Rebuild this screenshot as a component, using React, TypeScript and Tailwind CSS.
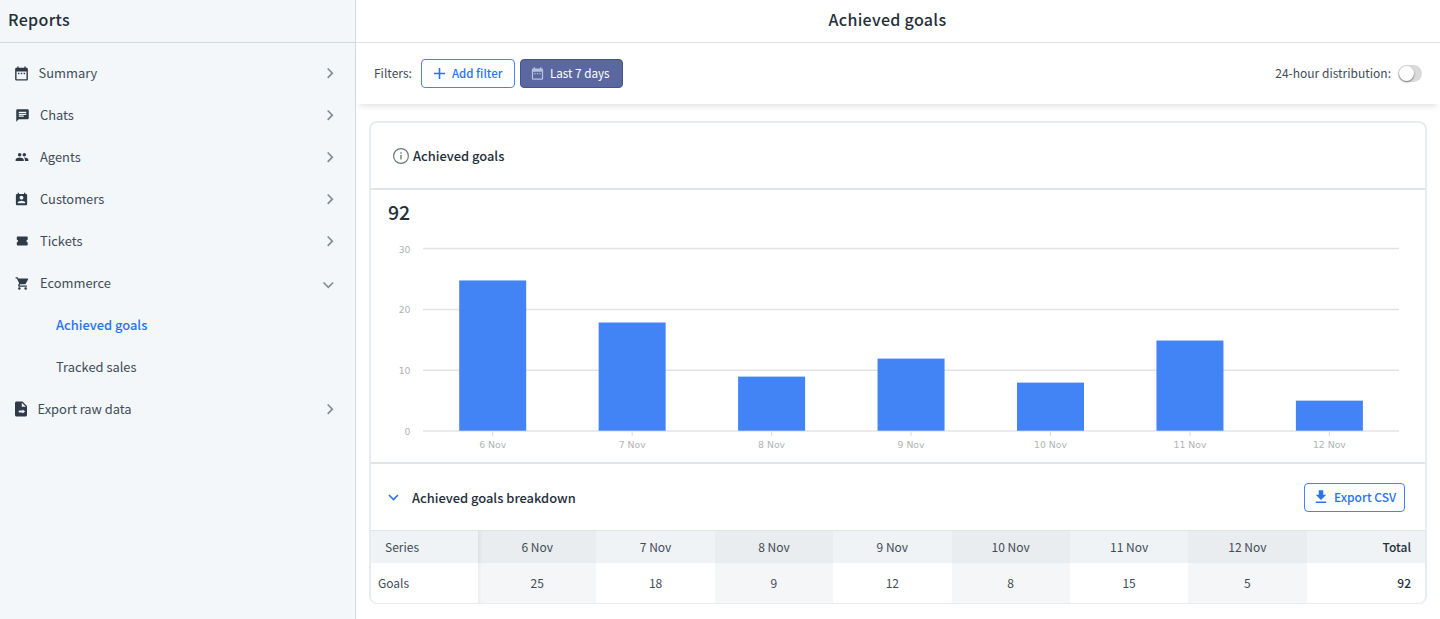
import type { ReactNode } from 'react';
import { MdAdd, MdChat, MdDateRange, MdDownload, MdGroup, MdPermContactCalendar, MdShoppingCart } from 'react-icons/md';

interface NavItem {
  label: string;
  icon: ReactNode;
  gap: string;
  children?: string[];
}

const navItems: NavItem[] = [
  { label: 'Summary', icon: <MdDateRange size={17} />, gap: 'pl-[13px] gap-[8.500px]' },
  { label: 'Chats', icon: <MdChat size={15} />, gap: 'pl-[15px] gap-[10px]' },
  { label: 'Agents', icon: <MdGroup size={14} />, gap: 'pl-[15px] gap-[11px]' },
  { label: 'Customers', icon: <MdPermContactCalendar size={15} />, gap: 'pl-[14px] gap-[11px]' },
  { label: 'Tickets', icon: <TicketIcon />, gap: 'pl-[15px] gap-[11px]' },
  {
    label: 'Ecommerce',
    icon: <MdShoppingCart size={15} />,
    gap: 'pl-[15px] gap-[10px]',
    children: ['Achieved goals', 'Tracked sales'],
  },
  { label: 'Export raw data', icon: <ExportFileIcon />, gap: 'pl-[12px] gap-[7.500px]' },
];

const series = [
  { day: '6 Nov', goals: 25 },
  { day: '7 Nov', goals: 18 },
  { day: '8 Nov', goals: 9 },
  { day: '9 Nov', goals: 12 },
  { day: '10 Nov', goals: 8 },
  { day: '11 Nov', goals: 15 },
  { day: '12 Nov', goals: 5 },
];

const total = series.reduce((sum, d) => sum + d.goals, 0);

function TicketIcon() {
  return (
    <svg width="14" height="14" viewBox="0 0 14 14" fill="currentColor">
      <path d="M2.500 2.500h9.500q.7 0 .7.700v2.600a1.200 1.200 0 0 0 0 2.400v2.600q0 .7-.7.700H2.500q-.7 0-.7-.700V8.200a1.200 1.200 0 0 0 0-2.400V3.200q0-.7.700-.7z" />
    </svg>
  );
}

function ExportFileIcon() {
  return (
    <svg width="18" height="18" viewBox="0 0 24 24" fill="currentColor">
      <path d="M14 2H6c-1.100 0-2 .9-2 2v16c0 1.100.9 2 2 2h12c1.100 0 2-.9 2-2V8l-6-6zm-1 7V3.500L18.500 9H13zm1 9v-1.500H9v-2.500h5V12.500l3.500 2.750L14 18z" />
    </svg>
  );
}

function Chevron({ down }: { down?: boolean }) {
  return down ? (
    <svg width="12" height="8" viewBox="0 0 12 8" fill="none" stroke="#868c93" strokeWidth="1.700" className="mt-[3px] mr-[-1px]">
      <path d="M1.500 1.500 6.300 6.300 11.100 1.500" />
    </svg>
  ) : (
    <svg width="8" height="12" viewBox="0 0 8 12" fill="none" stroke="#868c93" strokeWidth="1.700" className="mr-[-1px]">
      <path d="M1.700 1.500 6.300 6.200 1.700 10.900" />
    </svg>
  );
}

function InfoIcon() {
  return (
    <svg width="16" height="16" viewBox="0 0 16 16" fill="none" stroke="#6f7780">
      <circle cx="8" cy="8" r="7.400" strokeWidth="1.200" />
      <path d="M8 7v4.500M8 4.300v1.400" strokeWidth="1.400" />
    </svg>
  );
}

function Sidebar() {
  return (
    <aside className="flex w-[356px] shrink-0 flex-col border-r border-[#d5dbe1] bg-[#f3f7fa]">
      <h2 className="h-[43px] border-b border-[#d0d7e4] pl-2 text-[16px] leading-[39px] font-medium tracking-[0.35px] text-[#242f3a]">
        Reports
      </h2>
      <nav className="pt-[9px] text-[12.9px] text-[#414c57]">
        {navItems.map((item) => (
          <div key={item.label}>
            <div className={`flex h-[42px] items-center pr-[22px] ${item.gap}`}>
              <span className="text-[#2f3b48]">{item.icon}</span>
              <span className="flex-1 leading-[20px]">{item.label}</span>
              <Chevron down={!!item.children} />
            </div>
            {item.children?.map((child, i) => (
              <div
                key={child}
                className={`flex h-[42px] items-center pl-[56px] ${i === 0 ? 'font-medium text-[#2a72f5]' : ''}`}
              >
                {child}
              </div>
            ))}
          </div>
        ))}
      </nav>
    </aside>
  );
}

function FilterBar() {
  return (
    <div className="flex h-[61px] items-center pr-[18px] pl-[18px] text-[12px] leading-[17px] text-[#414c57] shadow-[0_5px_6px_-3px_rgba(0,0,0,0.12)]">
      <span className="pb-[2px]">Filters:</span>
      <button className="ml-[9px] flex h-[29px] w-[94px] items-center gap-[3px] rounded border border-[#4384f5] pl-[8px] font-medium text-[#2a72f5]">
        <MdAdd size={19} />
        <span className="text-[11.500px]">Add filter</span>
      </button>
      <button className="ml-[5px] flex h-[29px] w-[103px] items-center gap-[5px] rounded border border-[#45548f] bg-[#5a689f] pl-[9px] text-white">
        <MdDateRange size={15} className="text-[#b9c0dc]" />
        <span className="pb-[2px] text-[11.700px]">Last 7 days</span>
      </button>
      <span className="ml-auto pb-[2px]">24-hour distribution:</span>
      <span className="ml-[7px] flex h-[17px] w-[24px] items-center rounded-full bg-[#dadada] px-px">
        <span className="h-[15px] w-[15px] rounded-full bg-white shadow-[0_1px_2px_rgba(0,0,0,0.5)]" />
      </span>
    </div>
  );
}

// the baseline is at y=201, one goal is about 6px tall
function Chart() {
  return (
    <svg width="1040" height="233" className="block" fontFamily="'DejaVu Sans', sans-serif" fontSize="9.300" fill="#b0b3b6">
      {[30, 20, 10, 0].map((v) => {
        const y = 201 - v * 6.08;
        return (
          <g key={v}>
            <path d={`M52 ${y}H1028`} stroke="#e1e3e6" strokeWidth="1.500" />
            <text x="39.500" y={y + 4} textAnchor="end">{v}</text>
          </g>
        );
      })}
      {series.map((d, i) => {
        const x = 121.700 + i * 139.450;
        const h = d.goals * 6.01;
        return (
          <g key={d.day}>
            <rect x={x - 33.500} y={200.700 - h} width="67" height={h} fill="#4284f5" />
            <path d={`M${x} 202v4`} stroke="#d8dbdf" />
            <text x={x} y="218" textAnchor="middle">{d.day}</text>
          </g>
        );
      })}
    </svg>
  );
}

function Breakdown() {
  return (
    <table className="w-full table-fixed border-collapse text-center text-[12px] leading-[17px] text-[#414c57]">
      <thead>
        <tr className="h-[32px] border-t border-[#dfe4e8] bg-[#eff3f6]">
          <th className="w-[107px] pb-px pl-[14px] text-left font-normal">Series</th>
          {series.map((d, i) => (
            <th
              key={d.day}
              className={`pb-px font-normal ${i % 2 === 0 ? 'bg-[#e9edf0]' : ''} ${i === 0 ? 'shadow-[inset_4px_0_4px_-3px_rgba(0,0,0,0.08)]' : ''}`}
            >
              {d.day}
            </th>
          ))}
          <th className="pr-[14px] pb-px text-right font-medium text-[#242f3a]">Total</th>
        </tr>
      </thead>
      <tbody>
        <tr className="h-[40px]">
          <td className="pl-[7px] text-left">Goals</td>
          {series.map((d, i) => (
            <td
              key={d.day}
              className={`${i % 2 === 0 ? 'bg-[#f5f6f8]' : ''} ${i === 0 ? 'shadow-[inset_4px_0_4px_-3px_rgba(0,0,0,0.06)]' : ''}`}
            >
              {d.goals}
            </td>
          ))}
          <td className="pr-[14px] text-right font-medium text-[#242f3a]">{total}</td>
        </tr>
      </tbody>
    </table>
  );
}

export default function App() {
  return (
    <div className="flex h-[619px] w-[1440px] overflow-hidden bg-white font-['Noto_Sans_CJK_SC',sans-serif]">
      <Sidebar />
      <main className="min-w-0 flex-1">
        <h1 className="h-[43px] border-b border-[#dfe2e7] pr-[21px] text-center text-[16px] leading-[39px] font-medium tracking-[0.32px] text-[#242f3a]">
          Achieved goals
        </h1>
        <FilterBar />
        <section className="mt-[17px] mr-[13px] ml-[13px] overflow-hidden rounded-lg border-2 border-b border-[#e8ebef]">
          <div className="flex h-[67px] items-center gap-[4px] border-b-2 border-[#dfe4e9] pl-[22px] text-[12.900px] font-medium text-[#242f3a]">
            <InfoIcon />
            Achieved goals
          </div>
          <div className="h-[274px] border-b-2 border-[#dfe4e9]">
            <div className="h-[40px] pl-[17px] text-[19.500px] leading-[44px] font-medium text-[#242f3a]">{total}</div>
            <Chart />
          </div>
          <div className="flex h-[66px] items-center pr-[20px] pl-[17px]">
            <svg width="11" height="7" viewBox="0 0 11 7" fill="none" stroke="#2a72f5" strokeWidth="1.600">
              <path d="M1 1 5.500 5.500 10 1" />
            </svg>
            <span className="mt-px ml-[13px] text-[12.900px] font-medium text-[#242f3a]">Achieved goals breakdown</span>
            <button className="ml-auto flex h-[29px] w-[101px] items-center gap-[4px] rounded border border-[#4384f5] pl-[7px] text-[12px] leading-[17px] font-medium text-[#2a72f5]">
              <MdDownload size={18} />
              <span className="pb-px">Export CSV</span>
            </button>
          </div>
          <Breakdown />
        </section>
      </main>
    </div>
  );
}
